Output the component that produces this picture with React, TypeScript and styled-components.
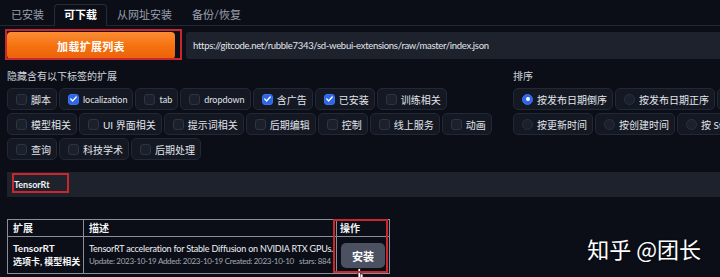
import React from "react";
import styled, { createGlobalStyle } from "styled-components";

type Tag = { label: string; checked?: boolean }

const hideRows: Tag[][] = [
  [{ label: "脚本" }, { label: "localization", checked: true }, { label: "tab" }, { label: "dropdown" }, { label: "含广告", checked: true }, { label: "已安装", checked: true }, { label: "训练相关" }],
  [{ label: "模型相关" }, { label: "UI 界面相关" }, { label: "提示词相关" }, { label: "后期编辑" }, { label: "控制" }, { label: "线上服务" }, { label: "动画" }],
  [{ label: "查询" }, { label: "科技学术" }, { label: "后期处理" }],
]

const sortRows: Tag[][] = [
  [{ label: "按发布日期倒序", checked: true }, { label: "按发布日期正序" }, { label: "按首字母正序" }],
  [{ label: "按更新时间" }, { label: "按创建时间" }, { label: "按 Stars 数量" }],
]

const isLatin = (s: string) => /^[\x00-\x7f]+$/.test(s)

const GlobalStyle = createGlobalStyle`
  html, body {
    margin: 0;
    padding: 0;
    background: #0b0e17;
    overflow: hidden;
  }
  body {
    font-family: Lato, "Noto Sans CJK SC", sans-serif;
    color: #e5e7eb;
  }
`

const Page = styled.div`
  position: relative;
  width: 720px;
  height: 277px;
  overflow: hidden;
`

const TabBar = styled.div`
  display: flex;
  height: 21px;
  margin-top: 4px;
  padding-left: 1px;
  border-bottom: 1px solid #232733;
`

const Tab = styled.div<{ active?: boolean }>`
  padding: 0 10px;
  font-size: 11px;
  line-height: 21px;
  color: #9ba1ad;
  white-space: nowrap;
  ${({ active }) => active && `
    padding: 0 9px;
    color: #fff;
    font-weight: 700;
    line-height: 20px;
    border: 1px solid #272b36;
    border-bottom: none;
    border-radius: 4px 4px 0 0;
    background: #0b0e17;
    height: 21px;
  `}
`

const Toolbar = styled.div`
  display: flex;
  gap: 11px;
  padding-left: 7px;
  margin-top: 6px;
`

const Marked = styled.div`
  position: relative;
`

const Annotation = styled.div<{ inset: string }>`
  position: absolute;
  inset: ${({ inset }) => inset};
  border: 2px solid #c9272b;
  box-sizing: border-box;
  pointer-events: none;
`

const LoadButton = styled.button`
  width: 168px;
  height: 27px;
  border: none;
  border-radius: 4px;
  background: linear-gradient(180deg, #fb8d33 0%, #f5700f 55%, #ea620a 100%);
  color: #fff;
  font-family: inherit;
  font-size: 11px;
  font-weight: 700;
  letter-spacing: 0.3px;
`

const UrlInput = styled.div`
  flex: 1;
  height: 27px;
  padding-left: 7px;
  background: #1e222c;
  border-radius: 3px 0 0 3px;
  font-size: 9.5px;
  letter-spacing: -0.3px;
  line-height: 27px;
  color: #e3e6ec;
  white-space: nowrap;
`

const Filters = styled.div`
  display: grid;
  grid-template-columns: 494px 320px;
  column-gap: 12px;
  padding-left: 7px;
  margin-top: 10px;
`

const GroupLabel = styled.div`
  font-size: 10px;
  line-height: 14px;
  color: #d0d4dc;
  margin-bottom: 5px;
`

const Rows = styled.div`
  display: flex;
  flex-direction: column;
  gap: 3px;
`

const Row = styled.div`
  display: flex;
  gap: 2px;
`

const Chip = styled.label`
  display: flex;
  align-items: center;
  gap: 4px;
  height: 22px;
  box-sizing: border-box;
  padding: 0 5px 0 8px;
  background: #141823;
  border: 1px solid #232836;
  border-radius: 5px;
  color: #e2e5ea;
  white-space: nowrap;
  flex-shrink: 0;
`

const ChipText = styled.span<{ latin?: boolean }>`
  font-size: ${({ latin }) => (latin ? 9 : 10)}px;
`

const Box = styled.span<{ checked?: boolean }>`
  display: flex;
  align-items: center;
  justify-content: center;
  width: 11px;
  height: 11px;
  box-sizing: border-box;
  border-radius: 3px;
  background: ${({ checked }) => (checked ? "#2f66e8" : "#1b202c")};
  border: 1px solid ${({ checked }) => (checked ? "#3b72f0" : "#2e3442")};
`

const Radio = styled.span<{ checked?: boolean }>`
  display: flex;
  align-items: center;
  justify-content: center;
  width: 11px;
  height: 11px;
  box-sizing: border-box;
  border-radius: 50%;
  background: ${({ checked }) => (checked ? "#2f66e8" : "#1b202c")};
  border: 1px solid ${({ checked }) => (checked ? "#3b72f0" : "#2a303d")};

  &::after {
    content: "";
    width: 4px;
    height: 4px;
    border-radius: 50%;
    background: #fff;
    display: ${({ checked }) => (checked ? "block" : "none")};
  }
`

const SearchBox = styled.div`
  position: relative;
  height: 25px;
  margin: 12px 0 0 7px;
  padding-left: 7px;
  background: #1e222c;
  font-size: 9px;
  font-weight: 700;
  line-height: 25px;
  color: #f0f2f5;
`

const Table = styled.table`
  margin: 22px 0 0 7px;
  border-collapse: collapse;
  table-layout: fixed;
  width: 379px;
  color: #f3f4f6;
`

const Th = styled.th<{ w: number; pad?: number }>`
  width: ${({ w, pad = 5 }) => w - pad}px;
  height: 16px;
  padding: 0 0 0 ${({ pad = 5 }) => pad}px;
  border: 1px solid #8a8f99;
  text-align: left;
  font-size: 10px;
  font-weight: 700;
  line-height: 16px;
`

const Td = styled.td<{ center?: boolean }>`
  position: relative;
  height: 36px;
  padding: 0 0 0 ${({ center }) => (center ? 0 : 5)}px;
  border: 1px solid #8a8f99;
  vertical-align: middle;
  text-align: ${({ center }) => (center ? "center" : "left")};
  white-space: nowrap;
  overflow: visible;
`

const ExtName = styled.div<{ small?: boolean }>`
  font-size: ${({ small }) => (small ? 9 : 10)}px;
  font-weight: 700;
  line-height: 14px;
`

const Desc = styled.div`
  font-size: 9px;
  line-height: 13px;
  color: #eef0f3;
  letter-spacing: -0.2px;
`

const Meta = styled.div`
  font-size: 8px;
  line-height: 13px;
  color: #a3a9b4;
  letter-spacing: -0.3px;
`

const InstallWrap = styled.div`
  position: relative;
  display: inline-block;
  margin-top: 1px;
`

const InstallButton = styled.button`
  width: 44px;
  height: 25px;
  border: none;
  border-radius: 5px;
  background: #4b5160;
  color: #fff;
  font-family: inherit;
  font-size: 11px;
  font-weight: 700;
`

const Cursor = styled.svg`
  position: absolute;
  left: 15px;
  top: 25px;
`

const Watermark = styled.div`
  position: absolute;
  right: 19px;
  bottom: 17px;
  font-family: "Noto Sans CJK SC", sans-serif;
  font-size: 22px;
  line-height: 24px;
  color: #fff;
  white-space: nowrap;
  text-shadow: 0 0 2px rgba(0, 0, 0, 0.6);
`

function Check() {
  return (
    <svg width="7" height="6" viewBox="0 0 7 6" fill="none">
      <path d="M0.8 3.1L2.7 4.9L6.2 1" stroke="#fff" strokeWidth="1.4" strokeLinecap="round" strokeLinejoin="round" />
    </svg>
  )
}

export default function App() {
  return (
    <Page>
      <GlobalStyle />
      <TabBar>
        <Tab>已安装</Tab>
        <Tab active>可下载</Tab>
        <Tab>从网址安装</Tab>
        <Tab>备份/恢复</Tab>
      </TabBar>

      <Toolbar>
        <Marked>
          <LoadButton>加载扩展列表</LoadButton>
          <Annotation inset="-3px -7px -1px -2px" />
        </Marked>
        <UrlInput>https://gitcode.net/rubble7343/sd-webui-extensions/raw/master/index.json</UrlInput>
      </Toolbar>

      <Filters>
        <div>
          <GroupLabel>隐藏含有以下标签的扩展</GroupLabel>
          <Rows>
            {hideRows.map((row, i) => (
              <Row key={i}>
                {row.map((tag) => (
                  <Chip key={tag.label}>
                    <Box checked={tag.checked}>{tag.checked && <Check />}</Box>
                    <ChipText latin={isLatin(tag.label)}>{tag.label}</ChipText>
                  </Chip>
                ))}
              </Row>
            ))}
          </Rows>
        </div>
        <div>
          <GroupLabel>排序</GroupLabel>
          <Rows>
            {sortRows.map((row, i) => (
              <Row key={i}>
                {row.map((tag) => (
                  <Chip key={tag.label}>
                    <Radio checked={tag.checked} />
                    <ChipText>{tag.label}</ChipText>
                  </Chip>
                ))}
              </Row>
            ))}
          </Rows>
        </div>
      </Filters>

      <SearchBox>
        TensorRt
        <Annotation inset="1px auto auto 5px" style={{ width: 57, height: 20 }} />
      </SearchBox>

      <Table>
        <thead>
          <tr>
            <Th w={75}>扩展</Th>
            <Th w={252}>描述</Th>
            <Th w={52} pad={3}>操作</Th>
          </tr>
        </thead>
        <tbody>
          <tr>
            <Td>
              <ExtName>TensorRT</ExtName>
              <ExtName small>选项卡, 模型相关</ExtName>
            </Td>
            <Td>
              <Desc>TensorRT acceleration for Stable Diffusion on NVIDIA RTX GPUs.</Desc>
              <Meta>Update: 2023-10-19 Added: 2023-10-19 Created: 2023-10-10&nbsp;&nbsp;&nbsp;stars: 884</Meta>
            </Td>
            <Td center>
              <InstallWrap>
                <InstallButton>安装</InstallButton>
                <Cursor width="8" height="12" viewBox="0 0 8 12">
                  <path d="M2 0.5h2.5v11H2z" fill="#fff" stroke="#111" strokeWidth="0.8" />
                  <path d="M4.5 6h2.5v5.5H4.5" fill="#fff" stroke="#111" strokeWidth="0.8" />
                </Cursor>
              </InstallWrap>
            </Td>
          </tr>
        </tbody>
      </Table>
      <Annotation inset="219px auto auto 333px" style={{ width: 55, height: 54 }} />

      <Watermark>知乎 @团长</Watermark>
    </Page>
  )
}
